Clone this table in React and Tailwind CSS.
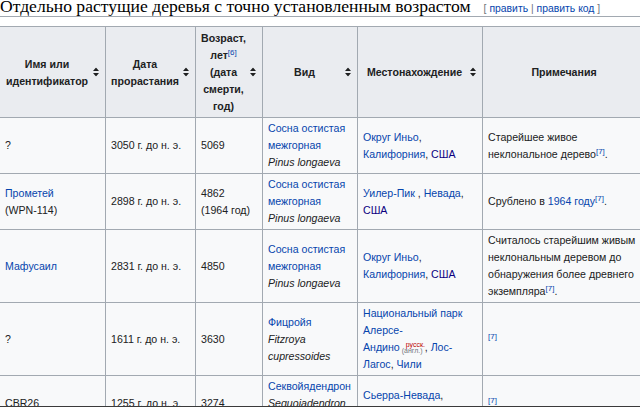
import React from "react";

const L = "text-[#0645ad]";
const V = "text-[#0b0080]";

function SortIcon() {
  return (
    <svg
      className="absolute right-[6px] top-1/2 -translate-y-1/2"
      width="6"
      height="9"
      viewBox="0 0 6 9"
    >
      <path d="M3 0L6 3.6H0Z M3 9L0 5.4H6Z" fill="#202122" />
    </svg>
  );
}

function Th({ children, sort = true }) {
  return (
    <div
      className={`relative flex items-center justify-center text-center font-bold bg-[#eaecf0] border-r border-b border-[#a2a9b1] pt-[3px] pb-[2px] ${
        sort ? "pl-[5px] pr-[16px]" : "px-[5px]"
      }`}
    >
      <div>{children}</div>
      {sort && <SortIcon />}
    </div>
  );
}

function Td({ children }) {
  return (
    <div className="flex items-center bg-[#f8f9fa] border-r border-b border-[#a2a9b1] px-[5px] py-[2px]">
      <div>{children}</div>
    </div>
  );
}

function Ref({ n }) {
  return <sup className={L}>[{n}]</sup>;
}

function Pine() {
  return (
    <>
      <span className={L}>Сосна остистая</span>
      <br />
      <span className={L}>межгорная</span>
      <br />
      <i>Pinus longaeva</i>
    </>
  );
}

function Inyo() {
  return (
    <>
      <span className={L}>Округ Иньо</span>,
      <br />
      <span className={L}>Калифорния</span>, <span className={V}>США</span>
    </>
  );
}

export default function App() {
  return (
    <div className="relative w-[640px] h-[407px] overflow-hidden bg-white font-['Liberation_Sans',Arial,sans-serif] text-[#202122]">
      <div className="flex items-baseline h-[17px] border-b border-[#a2a9b1]">
        <h2 className="font-['Liberation_Serif','Times_New_Roman',serif] text-[17.6px] leading-[13px] text-black whitespace-nowrap">
          Отдельно растущие деревья с точно установленным возрастом
        </h2>
        <span className="ml-[13px] text-[10.4px] text-[#72777d] whitespace-nowrap">
          [ <span className={L}>править</span> | <span className={L}>править код</span> ]
        </span>
      </div>

      <div className="mt-[9px] w-[646px] grid grid-cols-[106px_90px_67px_95px_125px_163px] border-t border-[#a2a9b1] text-[10.6px] leading-[17px]">
        <Th>
          Имя или
          <br />
          идентификатор
        </Th>
        <Th>
          Дата
          <br />
          прорастания
        </Th>
        <Th>
          Возраст,
          <br />
          лет<sup className={`${L} font-normal`}>[6]</sup>
          <br />
          (дата
          <br />
          смерти,
          <br />
          год)
        </Th>
        <Th>Вид</Th>
        <Th>Местонахождение</Th>
        <Th sort={false}>Примечания</Th>

        {/* Row 1 */}
        <Td>?</Td>
        <Td>3050 г. до н. э.</Td>
        <Td>5069</Td>
        <Td>
          <Pine />
        </Td>
        <Td>
          <Inyo />
        </Td>
        <Td>
          Старейшее живое
          <br />
          неклональное дерево
          <Ref n={7} />.
        </Td>

        {/* Row 2 */}
        <Td>
          <span className={L}>Прометей</span>
          <br />
          (WPN-114)
        </Td>
        <Td>2898 г. до н. э.</Td>
        <Td>
          4862
          <br />
          (1964 год)
        </Td>
        <Td>
          <Pine />
        </Td>
        <Td>
          <span className={L}>Уилер-Пик</span> , <span className={L}>Невада</span>,
          <br />
          <span className={V}>США</span>
        </Td>
        <Td>
          Срублено в <span className={L}>1964 году</span>
          <Ref n={7} />.
        </Td>

        {/* Row 3 */}
        <Td>
          <span className={L}>Мафусаил</span>
        </Td>
        <Td>2831 г. до н. э.</Td>
        <Td>4850</Td>
        <Td>
          <Pine />
        </Td>
        <Td>
          <Inyo />
        </Td>
        <Td>
          Считалось старейшим живым
          <br />
          неклональным деревом до
          <br />
          обнаружения более древнего
          <br />
          экземпляра
          <Ref n={7} />.
        </Td>

        {/* Row 4 */}
        <Td>?</Td>
        <Td>1611 г. до н. э.</Td>
        <Td>3630</Td>
        <Td>
          <span className={L}>Фицройя</span>
          <br />
          <i>Fitzroya</i>
          <br />
          <i>cupressoides</i>
        </Td>
        <Td>
          <span className={L}>Национальный парк</span>
          <br />
          <span className={L}>Алерсе-</span>
          <br />
          <span className={L}>Андино</span>
          <span className="relative inline-block w-[23px] h-[10px] ml-[2px] text-[7px] leading-[7px] whitespace-nowrap">
            <span className="absolute left-0 top-[5.5px] text-[#72777d]">(англ.)</span>
            <span className="absolute left-[4px] top-[-0.5px] text-[#ba0000]">русск.</span>
          </span>
          , <span className={L}>Лос-</span>
          <br />
          <span className={L}>Лагос</span>, <span className={L}>Чили</span>
        </Td>
        <Td>
          <Ref n={7} />
        </Td>

        {/* Row 5 */}
        <Td>CBR26</Td>
        <Td>1255 г. до н. э.</Td>
        <Td>3274</Td>
        <Td>
          <span className={L}>Секвойядендрон</span>
          <br />
          <i>Sequoiadendron</i>
          <br />
          <i>giganteum</i>
        </Td>
        <Td>
          <span className={L}>Сьерра-Невада</span>,
          <br />
          <span className={L}>Калифорния</span>, <span className={V}>США</span>
        </Td>
        <Td>
          <Ref n={7} />
        </Td>
      </div>

      <div className="absolute left-0 bottom-0 w-full h-px bg-[#3a3a3a]" />
    </div>
  );
}
